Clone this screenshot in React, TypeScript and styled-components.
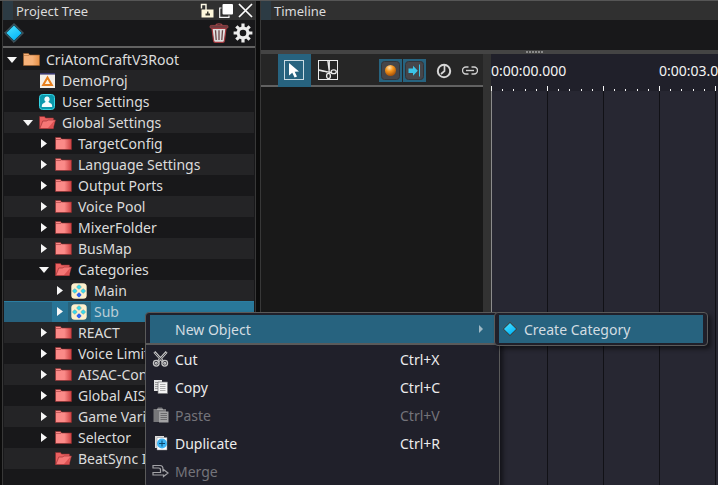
import React from "react";
import styled, { createGlobalStyle, css } from "styled-components";

const GlobalStyle = createGlobalStyle`
  *, *::before, *::after { box-sizing: border-box; }
  body {
    margin: 0;
    background: #0c0c0c;
    color: #dcdcdc;
    font: 14px/20px "Noto Sans", "Open Sans", sans-serif;
  }
  button { font: inherit; color: inherit; background: none; border: 0; padding: 0; margin: 0; }
  h2, ul { margin: 0; padding: 0; list-style: none; }
  svg { display: block; flex: none; }
`;

/* ---------- layout ---------- */

const Workspace = styled.div`
  position: relative;
  display: flex;
  gap: 4px;
  height: 100vh;
  overflow: hidden;
  padding-left: 2px;
  border-top: 1px solid #565656;
`;

const Panel = styled.section<{ $grow?: boolean }>`
  display: flex;
  flex-direction: column;
  min-width: 0;
  background: #18181a;
  border-left: 1px solid #383838;
  ${(p) =>
    p.$grow
      ? css`
          flex: 1;
        `
      : css`
          flex: 0 0 254px;
          border-right: 1px solid #383838;
        `}
`;

const TitleBar = styled.header`
  display: flex;
  align-items: center;
  flex: none;
  height: 19px;
  background: #303030;
  border-left: 10px solid #2c3b44;
  padding: 0 2px 0 3px;
`;

const Title = styled.h2`
  flex: 1;
  font-size: 13px;
  font-weight: 400;
  line-height: 20px;
`;

const TitleActions = styled.div`
  display: flex;
  align-items: center;
  gap: 5px;
`;

const IconButton = styled.button`
  display: flex;
  align-items: center;
  justify-content: center;
`;

const TreeToolbar = styled.div`
  display: flex;
  align-items: center;
  gap: 4px;
  flex: none;
  height: 28px;
  padding: 0 2px 0 1px;
  border-bottom: 2px solid #626262;
`;

const Spacer = styled.div`
  flex: 1;
`;

/* ---------- tree ---------- */

const TreeList = styled.ul`
  flex: 1;
  overflow: hidden;
  padding: 1px 1px 0;
`;

const TreeRow = styled.li<{ $level: number; $selected?: boolean }>`
  display: flex;
  align-items: center;
  height: 21px;
  padding-left: ${(p) => p.$level * 16}px;
  white-space: nowrap;
  &:nth-child(even) {
    background: #242426;
  }
  ${(p) =>
    p.$selected &&
    css`
      && {
        color: #b9cdd6;
        background: linear-gradient(90deg, #27617d 48px, #287496 48px 64px, #28637c 64px 87px, #29789a 87px);
        box-shadow: inset 0 1px #2b7ea2;
      }
    `}
`;

const ArrowSlot = styled.span`
  display: flex;
  justify-content: center;
  width: 16px;
`;

const IconSlot = styled.span`
  display: flex;
  justify-content: center;
  width: 22px;
`;

const Label = styled.span`
  padding-left: 4px;
`;

/* ---------- timeline ---------- */

const EmptyStrip = styled.div`
  flex: none;
  height: 30px;
`;

const Splitter = styled.div`
  display: flex;
  align-items: center;
  justify-content: center;
  gap: 1px;
  flex: none;
  height: 4px;
  padding-left: 90px;
  background: #444;
`;

const Grip = styled.i`
  width: 2px;
  height: 2px;
  background: #8a8a8a;
`;

const TimelineBody = styled.div`
  display: flex;
  flex: 1;
  min-height: 0;
`;

const Tracks = styled.div`
  flex: 0 0 222px;
  min-width: 0;
  background: #191919;
`;

const TrackToolbar = styled.div`
  display: flex;
  height: 33px;
  padding-left: 17px;
  background: #262626;
  border-bottom: 2px solid #626262;
`;

const ToolButton = styled(IconButton)<{ $active?: boolean }>`
  align-items: flex-start;
  justify-content: flex-start;
  width: 33px;
  height: 33px;
  padding: 6px;
  background: ${(p) => (p.$active ? "#27637f" : "transparent")};
`;

const ToolGroup = styled.div`
  display: flex;
  gap: 1px;
`;

const ToggleGroup = styled.div`
  display: flex;
  align-items: center;
  gap: 1px;
  height: 33px;
  margin-left: 34px;
`;

const ToggleButton = styled(IconButton)<{ $on?: boolean }>`
  width: ${(p) => (p.$on ? 23 : 16)}px;
  height: 23px;
  margin-left: ${(p) => (p.$on ? 0 : 9)}px;
  background: ${(p) => (p.$on ? "#27637f" : "transparent")};
`;

const ScrollGutter = styled.div`
  flex: 0 0 8px;
  background: #323232;
`;

const Canvas = styled.div`
  display: flex;
  flex-direction: column;
  flex: 1;
  min-width: 0;
  overflow: hidden;
`;

const Ruler = styled.div`
  flex: none;
  background: #20202a;
`;

const TimeLabels = styled.div`
  display: flex;
  height: 32px;
`;

const TimeLabel = styled.span`
  flex: 0 0 168px;
  color: #f4f4f4;
  line-height: 34px;
`;

const Ticks = styled.div`
  display: flex;
  height: 5px;
`;

const TickCell = styled.div`
  display: flex;
  align-items: flex-end;
  flex: 0 0 56px;
`;

const Tick = styled.i<{ $major?: boolean }>`
  flex: 1;
  height: ${(p) => (p.$major ? 5 : 2)}px;
  border-left: 1px solid #f4f4f4;
`;

const Grid = styled.div`
  flex: 1;
  border-left: 1px solid #8c8c8c;
  background: repeating-linear-gradient(90deg, #272732 0 55px, #111116 55px 56px);
`;

/* ---------- menus ---------- */

const Menu = styled.div`
  position: absolute;
  left: 145px;
  top: 311px;
  width: 355px;
  padding: 2px 4px;
  background: #20202a;
  border: 1px solid #5a5a5a;
  border-radius: 4px;
  box-shadow: 3px 3px 4px rgba(0, 0, 0, 0.5);
`;

const SubMenu = styled(Menu)`
  left: 494px;
  width: 214px;
`;

const MenuItem = styled.button<{ $active?: boolean }>`
  display: flex;
  align-items: center;
  width: 100%;
  height: 28px;
  text-align: left;
  color: ${(p) => (p.$active ? "#d3dde2" : "#ececec")};
  background: ${(p) => (p.$active ? "#27637f" : "transparent")};
  &:disabled {
    color: #74747a;
  }
`;

const MenuIcon = styled.span`
  display: flex;
  justify-content: center;
  width: 21px;
  margin-right: 4px;
`;

const MenuLabel = styled.span`
  flex: 1;
  padding-top: 2px;
`;

const Shortcut = styled.span`
  width: 95px;
  padding-top: 2px;
`;

const Divider = styled.div`
  height: 2px;
  margin: 0 -4px;
  background: #5a5a5a;
`;

/* ---------- icons ---------- */

const DiamondIcon = ({ size = 20 }: { size?: number }) => (
  <svg width={size} height={size} viewBox="0 0 20 20">
    <defs>
      <linearGradient id="cyan" x1="0" y1="0" x2="0.6" y2="1">
        <stop offset="0" stopColor="#4fe4ff" />
        <stop offset="1" stopColor="#06b6f8" />
      </linearGradient>
    </defs>
    <path d="M10 .6 19.4 10 10 19.4 .6 10Z" fill="#1c3c48" stroke="#52646c" />
    <path d="M10 2.4 17.6 10 10 17.6 2.4 10Z" fill="url(#cyan)" />
  </svg>
);

const LockIcon = () => (
  <svg width="14" height="15" viewBox="0 0 14 15">
    <path d="M1.500 5.500V1.500h4.500V7" fill="none" stroke="#fffbe8" strokeWidth="1.400" />
    <rect x="1.500" y="6.500" width="12" height="8" fill="#fff8dc" />
    <path d="M7 8.500h1.500v2H10V12.500H5.500v-2H7Z" fill="#3c3a30" />
  </svg>
);

const FloatIcon = () => (
  <svg width="14" height="14" viewBox="0 0 14 14">
    <path d="M2.500 4H.7v9.300H10V11.500" fill="none" stroke="#f4f4f4" strokeWidth="1.200" />
    <rect x="3.500" y="0" width="10.500" height="10.500" rx="1" fill="#fff" />
  </svg>
);

const CloseIcon = () => (
  <svg width="15" height="15" viewBox="0 0 15 15">
    <path d="m1 1 13 13M14 1 1 14" stroke="#fff" strokeWidth="1.700" />
  </svg>
);

const TrashIcon = () => (
  <svg width="20" height="20" viewBox="0 0 20 20">
    <path d="M7 2.500C7 1 8 .8 10 .8s3 .2 3 1.700" fill="none" stroke="#a04448" strokeWidth="1.300" />
    <rect x="1" y="2.400" width="18" height="2.800" rx="1.200" fill="#6c3c40" stroke="#a04448" strokeWidth=".8" />
    <path d="M3 5.500h14l-1.600 12.300q-.2 1.500-1.700 1.500H6.300q-1.500 0-1.700-1.500Z" fill="#dedede" stroke="#a3383e" strokeWidth="1.200" />
    <path d="m6.500 7.300.7 9.700M10 7.300V17m3.500-9.700-.7 9.700" stroke="#6d4648" strokeWidth="1.300" />
  </svg>
);

const GearIcon = () => (
  <svg width="20" height="20" viewBox="0 0 20 20">
    <g stroke="#ececec" strokeWidth="3.200">
      {[0, 45, 90, 135].map((angle) => (
        <path key={angle} d="M10 .6v4M10 15.400v4" transform={`rotate(${angle} 10 10)`} />
      ))}
    </g>
    <circle cx="10" cy="10" r="4.900" fill="none" stroke="#ececec" strokeWidth="3.200" />
  </svg>
);

const ArrowDown = () => (
  <svg width="10" height="6" viewBox="0 0 10 6">
    <path d="M0 0h10L5 6Z" fill="#f6f6f6" />
  </svg>
);

const ArrowRight = () => (
  <svg width="6" height="9" viewBox="0 0 6 9">
    <path d="M0 0v9l6-4.500Z" fill="#f6f6f6" />
  </svg>
);

const FolderIcon = ({ tone }: { tone: "orange" | "red" }) => {
  const [light, dark, edge] = tone === "orange" ? ["#f6b27a", "#e69046", "#a0602c"] : ["#fb8a88", "#cc4041", "#8c2a2c"];
  return (
    <svg width="17" height="13" viewBox="0 0 17 13">
      <defs>
        <linearGradient id={`folder-${tone}`}>
          <stop offset="0.55" stopColor={light} />
          <stop offset="1" stopColor={dark} />
        </linearGradient>
      </defs>
      <path d="M.5.5h5l1 1.500h10v10.500H.5Z" fill={`url(#folder-${tone})`} stroke={edge} strokeWidth=".6" />
      <path d="M1 2.500h5" stroke={edge} strokeWidth=".5" />
    </svg>
  );
};

const OpenFolderIcon = () => (
  <svg width="17" height="13" viewBox="0 0 17 13">
    <path d="M.5.5h5L6.500 2h8v10.500H.5Z" fill="#ea6060" stroke="#8c2a2c" strokeWidth=".6" />
    <path d="M.8 12.500 3.800 5h4l1-1h7.600L14 12.500Z" fill="#f67776" stroke="#a03436" strokeWidth=".7" />
    <path d="m9 12 6.500-7.500L13.700 12Z" fill="#dc5152" />
  </svg>
);

const ProjectIcon = () => (
  <svg width="15" height="15" viewBox="0 0 15 15">
    <rect width="15" height="15" fill="#f4efe8" />
    <path d="M0 .8h15" stroke="#3b3a70" strokeWidth="1.600" />
    <path d="M7.500 4.600 11.800 12H3.200Z" fill="#fff2dc" stroke="#e87f1c" strokeWidth="2" />
  </svg>
);

const UserIcon = () => (
  <svg width="16" height="16" viewBox="0 0 16 16">
    <rect x=".5" y=".5" width="15" height="15" rx="3" fill="#0a99ad" stroke="#35d4e4" />
    <path d="M8 2.600a2.500 2.700 0 0 1 1.500 5c.2 1 1 1.300 2.400 2 1 .6 1.300 1.700 1.300 3.400H2.800c0-1.700.3-2.800 1.300-3.400 1.400-.7 2.200-1 2.400-2A2.500 2.700 0 0 1 8 2.600Z" fill="#f4fbfc" />
  </svg>
);

const CategoryIcon = () => (
  <svg width="16" height="16" viewBox="0 0 16 16">
    <rect x=".3" y=".3" width="15.400" height="15.400" rx="3.500" fill="#fdf0cc" />
    <g fill="#34dcf0" stroke="#76a8a4" strokeWidth=".6">
      <rect x="6.200" y="2.200" width="3.600" height="3.600" rx="1" transform="rotate(45 8 4)" />
      <rect x="2" y="6.200" width="3.600" height="3.600" rx="1" transform="rotate(45 3.800 8)" />
      <rect x="10.400" y="6.200" width="3.600" height="3.600" rx="1" transform="rotate(45 12.200 8)" />
    </g>
    <rect x="6" y="9.900" width="4" height="4" rx="1" transform="rotate(45 8 11.900)" fill="#2f62f0" />
  </svg>
);

const CursorIcon = () => (
  <svg width="20" height="20" viewBox="0 0 20 20">
    <rect x=".5" y=".5" width="19" height="19" fill="none" stroke="#c9dbe3" />
    <path d="M5 3v12.500l3.300-2.700 2.300 4.800 2.400-1.200-2.300-4.600 4.300-.3Z" fill="#fff" />
  </svg>
);

const SplitIcon = () => (
  <svg width="20" height="20" viewBox="0 0 20 20" fill="none" stroke="#ececec">
    <rect x=".5" y=".5" width="19" height="19" />
    <path d="M9.800 1 11.500 13.500M1 9.800l13 3M11.300 1v9" strokeWidth="1.200" />
    <path d="M1 10.500 9 12" strokeWidth="1" />
    <ellipse cx="15.700" cy="11.800" rx="2.600" ry="1.900" strokeWidth="1.300" />
    <ellipse cx="10.500" cy="16" rx="1.900" ry="2.600" strokeWidth="1.300" />
  </svg>
);

const KeyCap = ({ children }: { children: React.ReactNode }) => (
  <svg width="19" height="19" viewBox="0 0 19 19">
    <rect x=".5" y=".5" width="18" height="18" rx="3" fill="#46464a" stroke="#343438" />
    {children}
  </svg>
);

const OrbIcon = () => (
  <KeyCap>
    <defs>
      <radialGradient id="orb" cx="0.4" cy="0.25" r="0.75">
        <stop offset="0" stopColor="#ffe2b4" />
        <stop offset="0.45" stopColor="#f5951c" />
        <stop offset="1" stopColor="#a85208" />
      </radialGradient>
    </defs>
    <circle cx="9.500" cy="9.500" r="5.500" fill="url(#orb)" />
  </KeyCap>
);

const SnapIcon = () => (
  <KeyCap>
    <path d="M3.500 7.500H8V4.700L12.800 9.700 8 14.700V12H3.500Z" fill="#3cc4e8" />
    <path d="M14.500 3.500v12" stroke="#3cc4e8" strokeWidth="1" />
  </KeyCap>
);

const ClockIcon = () => (
  <svg width="16" height="16" viewBox="0 0 16 16" fill="none" stroke="#d6d6d6">
    <circle cx="8" cy="8" r="6.200" strokeWidth="2" />
    <path d="M8.500 2v6L5 11" strokeWidth="1.700" />
  </svg>
);

const LinkIcon = () => (
  <svg width="16" height="9" viewBox="0 0 16 9" fill="none" stroke="#d0d0d0" strokeWidth="1.400">
    <path d="M6.500 1H4a3.500 3.500 0 0 0 0 7h2.500M9.500 1H12a3.500 3.500 0 0 1 0 7H9.500" />
    <path d="M4 4.500h8" />
  </svg>
);

const CutIcon = () => (
  <svg width="17" height="16" viewBox="0 0 17 17" fill="none">
    <path d="m2 1 9.500 10.500M15 1 5.500 11.500" stroke="#c4c4c4" strokeWidth="2.800" />
    <path d="m2.500 1.800 9 9.700M14.500 1.800l-9 9.700" stroke="#36363c" strokeWidth=".9" />
    <g stroke="#c4c4c4" strokeWidth="1.400">
      <circle cx="4" cy="13" r="3" />
      <circle cx="13" cy="13" r="3" />
      <circle cx="4" cy="13" r="1" />
      <circle cx="13" cy="13" r="1" />
    </g>
  </svg>
);

const CopyIcon = () => (
  <svg width="16" height="16" viewBox="0 0 16 16">
    <path d="M1 1h8v11H1Z" fill="#e4e4e4" />
    <path d="M2 3.500h3M2 5.500h3M2 7.500h3M2 9.500h3" stroke="#8a8a8a" strokeWidth=".8" />
    <path d="M5 3h9.500v11.500H5Z" fill="#f4f4f4" stroke="#77777a" strokeWidth=".7" />
    <path d="M7 5.500h5.500M7 7.500h5.500M7 9.500h5.500M7 11.500h5.500" stroke="#9c9c9c" strokeWidth=".8" />
  </svg>
);

const PasteIcon = () => (
  <svg width="16" height="16" viewBox="0 0 16 16">
    <path d="M.5 2H4l1-1.500h4L10 2h3v13H.5Z" fill="#77777a" />
    <path d="M4 2.500h6" stroke="#a8a8aa" />
    <path d="M6 4.500h9.500v11H6Z" fill="#a2a2a4" />
    <path d="M7.500 6.500H14M7.500 8.500H14M7.500 10.500H14M7.500 12.500H14" stroke="#646468" strokeWidth=".9" />
  </svg>
);

const DuplicateIcon = () => (
  <svg width="16" height="16" viewBox="0 0 16 16">
    <path d="M2 1h9v12H2Z" fill="#dcdcdc" />
    <path d="M4 2.500h10V15H4Z" fill="#fff" stroke="#88888c" strokeWidth=".5" />
    <circle cx="9" cy="8.500" r="5" fill="#3db4f4" />
    <path d="M9 5.500v6M6 8.500h6" stroke="#0a466c" strokeWidth="1" />
  </svg>
);

const MergeIcon = () => (
  <svg width="17" height="14" viewBox="0 0 17 14" fill="none" stroke="#a2a2a6" strokeWidth="1.200">
    <path d="M1 1.500h7q3 0 3 3.500v2h.5V5.500L16 9l-4.500 3.500V11H1V8.500h7.500V6q0-2-2-2H1Z" />
  </svg>
);

const SubmenuArrow = () => (
  <svg width="4" height="8" viewBox="0 0 4 8">
    <path d="M0 0v8l4-4Z" fill="#9fb9c5" />
  </svg>
);

/* ---------- data ---------- */

type TreeNode = {
  label: string;
  level: number;
  icon: React.ReactNode;
  state?: "open" | "closed";
  selected?: boolean;
};

const red = <FolderIcon tone="red" />;

const nodes: TreeNode[] = [
  { label: "CriAtomCraftV3Root", level: 0, icon: <FolderIcon tone="orange" />, state: "open" },
  { label: "DemoProj", level: 1, icon: <ProjectIcon /> },
  { label: "User Settings", level: 1, icon: <UserIcon /> },
  { label: "Global Settings", level: 1, icon: <OpenFolderIcon />, state: "open" },
  { label: "TargetConfig", level: 2, icon: red, state: "closed" },
  { label: "Language Settings", level: 2, icon: red, state: "closed" },
  { label: "Output Ports", level: 2, icon: red, state: "closed" },
  { label: "Voice Pool", level: 2, icon: red, state: "closed" },
  { label: "MixerFolder", level: 2, icon: red, state: "closed" },
  { label: "BusMap", level: 2, icon: red, state: "closed" },
  { label: "Categories", level: 2, icon: <OpenFolderIcon />, state: "open" },
  { label: "Main", level: 3, icon: <CategoryIcon />, state: "closed" },
  { label: "Sub", level: 3, icon: <CategoryIcon />, state: "closed", selected: true },
  { label: "REACT", level: 2, icon: red, state: "closed" },
  { label: "Voice Limit", level: 2, icon: red, state: "closed" },
  { label: "AISAC-Control", level: 2, icon: red, state: "closed" },
  { label: "Global AISAC", level: 2, icon: red, state: "closed" },
  { label: "Game Variable", level: 2, icon: red, state: "closed" },
  { label: "Selector", level: 2, icon: red, state: "closed" },
  { label: "BeatSync Info", level: 2, icon: <OpenFolderIcon /> },
];

const commands = [
  { label: "Cut", keys: "Ctrl+X", icon: <CutIcon /> },
  { label: "Copy", keys: "Ctrl+C", icon: <CopyIcon /> },
  { label: "Paste", keys: "Ctrl+V", icon: <PasteIcon />, disabled: true },
  { label: "Duplicate", keys: "Ctrl+R", icon: <DuplicateIcon /> },
  { label: "Merge", keys: "", icon: <MergeIcon />, disabled: true },
];

const times = ["0:00:00.000", "0:00:03.000"];
const cells = Array.from({ length: 12 }, (_, i) => i);
const grips = Array.from({ length: 6 }, (_, i) => i);

/* ---------- views ---------- */

const ProjectTree = () => (
  <Panel>
    <TitleBar>
      <Title>Project Tree</Title>
      <TitleActions>
        <IconButton aria-label="Lock panel"><LockIcon /></IconButton>
        <IconButton aria-label="Float panel"><FloatIcon /></IconButton>
        <IconButton aria-label="Close panel"><CloseIcon /></IconButton>
      </TitleActions>
    </TitleBar>
    <TreeToolbar>
      <IconButton aria-label="New object"><DiamondIcon /></IconButton>
      <Spacer />
      <IconButton aria-label="Delete"><TrashIcon /></IconButton>
      <IconButton aria-label="Settings"><GearIcon /></IconButton>
    </TreeToolbar>
    <TreeList role="tree" aria-label="Project Tree">
      {nodes.map((node) => (
        <TreeRow
          key={node.label}
          role="treeitem"
          aria-level={node.level + 1}
          aria-expanded={node.state && node.state === "open"}
          aria-selected={!!node.selected}
          $level={node.level}
          $selected={node.selected}
        >
          <ArrowSlot>
            {node.state === "open" && <ArrowDown />}
            {node.state === "closed" && <ArrowRight />}
          </ArrowSlot>
          <IconSlot>{node.icon}</IconSlot>
          <Label>{node.label}</Label>
        </TreeRow>
      ))}
    </TreeList>
  </Panel>
);

const Timeline = () => (
  <Panel $grow>
    <TitleBar>
      <Title>Timeline</Title>
    </TitleBar>
    <EmptyStrip />
    <Splitter>{grips.map((g) => <Grip key={g} />)}</Splitter>
    <TimelineBody>
      <Tracks>
        <TrackToolbar>
          <ToolGroup>
            <ToolButton $active aria-label="Select tool"><CursorIcon /></ToolButton>
            <ToolButton aria-label="Split tool"><SplitIcon /></ToolButton>
          </ToolGroup>
          <ToggleGroup>
            <ToggleButton $on aria-label="Markers"><OrbIcon /></ToggleButton>
            <ToggleButton $on aria-label="Snap"><SnapIcon /></ToggleButton>
            <ToggleButton aria-label="Time"><ClockIcon /></ToggleButton>
            <ToggleButton aria-label="Link"><LinkIcon /></ToggleButton>
          </ToggleGroup>
        </TrackToolbar>
      </Tracks>
      <ScrollGutter />
      <Canvas>
        <Ruler>
          <TimeLabels>{times.map((t) => <TimeLabel key={t}>{t}</TimeLabel>)}</TimeLabels>
          <Ticks>
            {cells.map((c) => (
              <TickCell key={c}>
                <Tick $major />
                <Tick />
                <Tick />
                <Tick />
                <Tick />
              </TickCell>
            ))}
          </Ticks>
        </Ruler>
        <Grid />
      </Canvas>
    </TimelineBody>
  </Panel>
);

export default function App() {
  return (
    <>
      <GlobalStyle />
      <Workspace>
        <ProjectTree />
        <Timeline />
        <Menu role="menu">
          <MenuItem role="menuitem" aria-haspopup="menu" aria-expanded $active>
            <MenuIcon />
            <MenuLabel>New Object</MenuLabel>
            <MenuIcon><SubmenuArrow /></MenuIcon>
          </MenuItem>
          <Divider />
          {commands.map((c) => (
            <MenuItem key={c.label} role="menuitem" disabled={c.disabled}>
              <MenuIcon>{c.icon}</MenuIcon>
              <MenuLabel>{c.label}</MenuLabel>
              <Shortcut>{c.keys}</Shortcut>
            </MenuItem>
          ))}
        </Menu>
        <SubMenu role="menu">
          <MenuItem role="menuitem" $active>
            <MenuIcon><DiamondIcon size={16} /></MenuIcon>
            <MenuLabel>Create Category</MenuLabel>
          </MenuItem>
        </SubMenu>
      </Workspace>
    </>
  );
}
